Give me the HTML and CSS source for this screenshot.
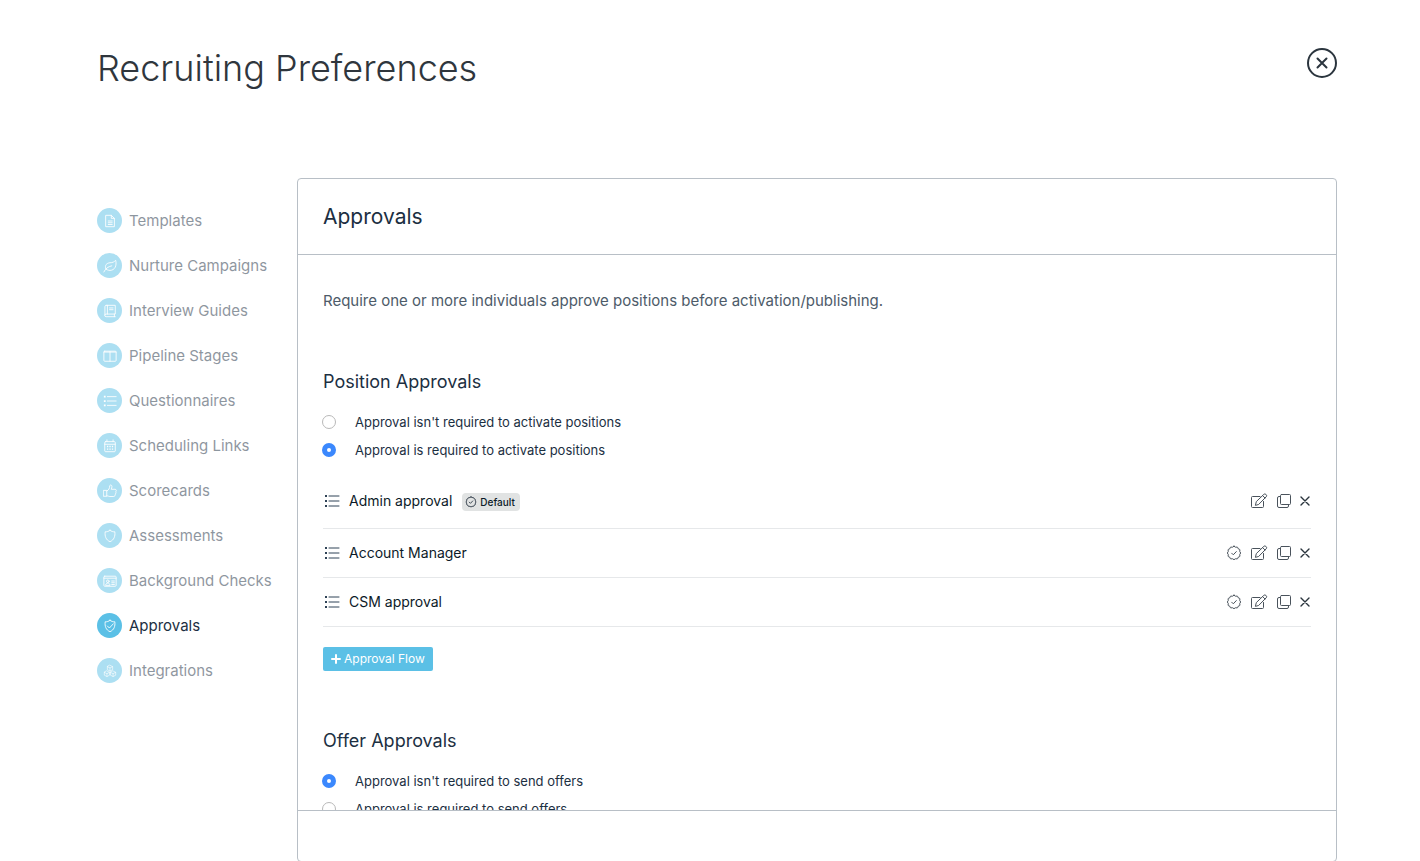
FILE: index.html
```html
<!DOCTYPE html>
<html lang="en">
<head>
<meta charset="UTF-8">
<meta name="viewport" content="width=device-width, initial-scale=1.0">
<title>Recruiting Preferences</title>
<link rel="stylesheet" href="styles.css">
</head>
<body>
<!-- Shared icons -->
<svg class="sprite" aria-hidden="true">
    <symbol id="i-list" viewBox="0 0 16 16">
        <path d="M5 3h10M5 8h10M5 13h10"/>
        <path class="dot" d="M1 2h2v2h-2zM1 7h2v2h-2zM1 12h2v2h-2z"/>
    </symbol>
    <symbol id="i-seal" viewBox="0 0 16 16">
        <path d="M8 1.300Q9.300 2.800 11.100 2.100Q11.900 2.100 12.200 3.800Q13.900 4.100 13.900 4.900Q13.200 6.700 14.700 8Q13.200 9.300 13.900 11.100Q13.900 11.900 12.200 12.200Q11.900 13.900 11.100 13.900Q9.300 13.200 8 14.700Q6.700 13.200 4.900 13.900Q4.100 13.900 3.800 12.200Q2.100 11.900 2.100 11.100Q2.800 9.300 1.300 8Q2.800 6.700 2.100 4.900Q2.100 4.100 3.800 3.800Q4.100 2.100 4.900 2.100Q6.700 2.800 8 1.300z"/>
        <path d="M5.700 8.200l1.600 1.600 3-3.200"/>
    </symbol>
    <symbol id="i-edit" viewBox="0 0 18 16">
        <path d="M10 3.500H2.500a1 1 0 0 0-1 1v9a1 1 0 0 0 1 1h10a1 1 0 0 0 1-1V8.500"/>
        <path d="M5.500 12l.8-3.400 7.500-7.200a1.500 1.500 0 0 1 2.100 0l.3.300a1.500 1.500 0 0 1 0 2.100L8.900 11.200zM12.600 2.600l2.400 2.400"/>
    </symbol>
    <symbol id="i-copy" viewBox="0 0 16 16">
        <rect x="4.500" y="1.500" width="10" height="10" rx="1"/>
        <path d="M4.500 3.500H3A1.500 1.500 0 0 0 1.500 5v8A1.500 1.500 0 0 0 3 14.500h8a1.500 1.500 0 0 0 1.500-1.500v-1.500"/>
    </symbol>
    <symbol id="i-x" viewBox="0 0 10 10">
        <path d="M1 1l8 8M9 1L1 9"/>
    </symbol>
</svg>

<div class="page">
    <header class="page-header">
        <h1>Recruiting Preferences</h1>
        <button type="button" class="btn-close" aria-label="Close">
            <svg viewBox="0 0 30 30"><circle cx="15" cy="15" r="14"/><path d="M10.500 10.500l9 9M19.500 10.500l-9 9"/></svg>
        </button>
    </header>

    <div class="columns">
        <nav class="side-nav">
            <a href="#">
                <span class="nav-icon"><svg viewBox="0 0 16 16"><path d="M3.500 1.500h6l3.500 3.500v9.500H3.500zM9.500 1.500V5H13M6 8h4.500M6 10h4.500M6 12h4.500"/></svg></span>
                Templates
            </a>
            <a href="#">
                <span class="nav-icon"><svg viewBox="0 0 16 16"><path d="M1 14.800c2-4 4.500-6 9-7M3.500 11.500C1.200 7 4.500 4.500 8 4.300c3 0 4.700-1 6.500-2.800 1.500 6-1 11.500-6.500 11.500-2 0-3.500-.6-4.500-1.500z"/></svg></span>
                Nurture Campaigns
            </a>
            <a href="#">
                <span class="nav-icon"><svg viewBox="0 0 16 16"><path d="M3.500 1.500H14v10H3.500A1.300 1.300 0 0 0 3.500 14.500H14M2.200 12.700V3A1.500 1.500 0 0 1 3.500 1.500M5 1.500v10M7.500 4.500h4M7.500 6.500h4M13 11.500v3"/></svg></span>
                Interview Guides
            </a>
            <a href="#">
                <span class="nav-icon"><svg viewBox="0 0 16 16"><rect x="1" y="2.500" width="14" height="11.500" rx="1"/><path d="M8 3v11M1 3.500h14"/></svg></span>
                Pipeline Stages
            </a>
            <a href="#">
                <span class="nav-icon"><svg><use href="#i-list"/></svg></span>
                Questionnaires
            </a>
            <a href="#">
                <span class="nav-icon"><svg viewBox="0 0 16 16"><rect x="2" y="3" width="12" height="11.500" rx="1"/><path d="M2 6h12M4.500 1v2M11.500 1v2"/><path class="dot" d="M4.500 7.800h1.500v1.500H4.500zM7.300 7.800h1.500v1.500H7.300zM10.100 7.800h1.500v1.500h-1.500zM4.500 10.800h1.500v1.500H4.500zM7.300 10.800h1.500v1.500H7.300zM10.100 10.800h1.500v1.500h-1.500z"/></svg></span>
                Scheduling Links
            </a>
            <a href="#">
                <span class="nav-icon"><svg viewBox="0 0 16 16"><path d="M.8 7.300h3.500V14H.8zM4.300 8C7 7 7.500 4.500 7.700 2.200c.1-1.500 2.500-1.500 2.500.8 0 1.200-.5 2.200-.8 3h4.300c1.800 0 1.800 2 .9 2.300.7.700.5 1.800-.3 2.100.4.800.1 1.600-.6 1.900.2 1-.4 2-1.400 2H8c-1.500 0-2-.8-3.700-.8"/></svg></span>
                Scorecards
            </a>
            <a href="#">
                <span class="nav-icon"><svg viewBox="0 0 16 16"><path d="M8 1.500c1.600 1.300 3.400 1.800 5.500 1.700.6 5-.8 9.300-5.500 11.300-4.700-2-6.100-6.300-5.500-11.300 2.100.1 3.900-.4 5.500-1.700z"/></svg></span>
                Assessments
            </a>
            <a href="#">
                <span class="nav-icon"><svg viewBox="0 0 16 16"><rect x="1" y="2.500" width="14" height="11.500" rx="1"/><path d="M1 4.800h14M10 8h3M10 10h3M10 12h3M3 12.500c.2-3 4.800-3 5 0z"/><circle cx="5.500" cy="8.300" r="1.500"/></svg></span>
                Background Checks
            </a>
            <a href="#" class="active" aria-current="page">
                <span class="nav-icon"><svg viewBox="0 0 16 16"><path d="M8 1.500c1.600 1.300 3.400 1.800 5.500 1.700.6 5-.8 9.300-5.500 11.300-4.700-2-6.100-6.300-5.500-11.300 2.100.1 3.900-.4 5.500-1.700zM5 8l2.300 2.300 4.500-4.800"/></svg></span>
                Approvals
            </a>
            <a href="#">
                <span class="nav-icon"><svg class="fine" viewBox="0 0 16 16"><path d="M8 1.500l3 1.500v3.500L8 8 5 6.500V3zM5 3l3 1.500L11 3M8 4.500V8M4.500 8l3 1.500v3.300l-3 1.500-3-1.500V9.500zM1.500 9.500l3 1.500 3-1.500M4.500 11v3.300M11.500 8l3 1.500v3.300l-3 1.500-3-1.500V9.500zM8.500 9.500l3 1.500 3-1.500M11.500 11v3.300"/></svg></span>
                Integrations
            </a>
        </nav>

        <main class="card">
            <div class="card-header">
                <h2>Approvals</h2>
            </div>
            <div class="card-body">
                <p class="intro">Require one or more individuals approve positions before activation/publishing.</p>

                <section>
                    <h3>Position Approvals</h3>
                    <label class="radio-row"><input type="radio" name="position"> Approval isn't required to activate positions</label>
                    <label class="radio-row"><input type="radio" name="position" checked> Approval is required to activate positions</label>

                    <ul class="flows">
                        <li class="flow flow-default">
                            <svg class="flow-icon"><use href="#i-list"/></svg>
                            <span class="flow-name">Admin approval</span>
                            <span class="badge"><svg><use href="#i-seal"/></svg>Default</span>
                            <div class="actions">
                                <button type="button" aria-label="Edit"><svg class="edit"><use href="#i-edit"/></svg></button>
                                <button type="button" aria-label="Duplicate"><svg><use href="#i-copy"/></svg></button>
                                <button type="button" aria-label="Delete"><svg class="x"><use href="#i-x"/></svg></button>
                            </div>
                        </li>
                        <li class="flow">
                            <svg class="flow-icon"><use href="#i-list"/></svg>
                            <span class="flow-name">Account Manager</span>
                            <div class="actions">
                                <button type="button" aria-label="Make default"><svg><use href="#i-seal"/></svg></button>
                                <button type="button" aria-label="Edit"><svg class="edit"><use href="#i-edit"/></svg></button>
                                <button type="button" aria-label="Duplicate"><svg><use href="#i-copy"/></svg></button>
                                <button type="button" aria-label="Delete"><svg class="x"><use href="#i-x"/></svg></button>
                            </div>
                        </li>
                        <li class="flow">
                            <svg class="flow-icon"><use href="#i-list"/></svg>
                            <span class="flow-name">CSM approval</span>
                            <div class="actions">
                                <button type="button" aria-label="Make default"><svg><use href="#i-seal"/></svg></button>
                                <button type="button" aria-label="Edit"><svg class="edit"><use href="#i-edit"/></svg></button>
                                <button type="button" aria-label="Duplicate"><svg><use href="#i-copy"/></svg></button>
                                <button type="button" aria-label="Delete"><svg class="x"><use href="#i-x"/></svg></button>
                            </div>
                        </li>
                    </ul>
                    <button type="button" class="btn-add"><svg viewBox="0 0 10 10"><path d="M5 1v8M1 5h8"/></svg>Approval Flow</button>
                </section>

                <section>
                    <h3>Offer Approvals</h3>
                    <label class="radio-row"><input type="radio" name="offer" checked> Approval isn't required to send offers</label>
                    <label class="radio-row"><input type="radio" name="offer"> Approval is required to send offers</label>
                </section>
            </div>
            <div class="card-footer"></div>
        </main>
    </div>
</div>
</body>
</html>
```

FILE: styles.css
```css
* {
    box-sizing: border-box;
}
body {
    margin: 0;
    font-family: Inter, "Liberation Sans", sans-serif;
    color: #1c2f42;
    background: #fff;
}
h1, h2, h3, p, ul {
    margin: 0;
    padding: 0;
}
button {
    font-family: inherit;
    color: inherit;
    border: 0;
    background: none;
    padding: 0;
    cursor: pointer;
}
svg {
    display: block;
    width: 16px;
    height: 16px;
    fill: none;
    stroke: currentColor;
    stroke-width: 1;
    stroke-linecap: round;
    stroke-linejoin: round;
}
.dot {
    fill: currentColor;
    stroke: none;
}
.sprite {
    display: none;
}

.page {
    display: flex;
    flex-direction: column;
    height: 100vh;
    padding: 44px 83px 0 97px;
    overflow: hidden;
}
.page-header {
    display: flex;
    justify-content: space-between;
    align-items: flex-start;
    margin-bottom: 86px;
}
h1 {
    font-size: 36px;
    line-height: 48px;
    font-weight: 300;
    color: #2f363d;
}
.btn-close {
    margin-top: 4px;
}
.btn-close svg {
    width: 30px;
    height: 30px;
    stroke: #2b353e;
    stroke-width: 2;
}
.columns {
    display: flex;
    flex: 1;
    min-height: 0;
}

/* Side navigation */
.side-nav {
    display: flex;
    flex-direction: column;
    flex: 0 0 200px;
    gap: 20px;
    padding-top: 30px;
}
.side-nav a {
    display: flex;
    align-items: center;
    gap: 7px;
    font-size: 15px;
    line-height: 25px;
    white-space: nowrap;
    color: #1c2f42;
    text-decoration: none;
    opacity: .5;
}
.side-nav a.active {
    opacity: 1;
}
.nav-icon {
    display: flex;
    align-items: center;
    justify-content: center;
    width: 25px;
    height: 25px;
    border-radius: 50%;
    background: #5bc0e6;
    color: #fff;
}
.nav-icon svg {
    width: 14px;
    height: 14px;
}
.nav-icon .fine {
    stroke-width: .7;
}

/* Card */
.card {
    display: flex;
    flex-direction: column;
    flex: 1;
    min-width: 0;
    margin-bottom: -1px;
    border: 1px solid #b8bfc6;
    border-radius: 4px;
}
.card-header {
    padding: 25px;
    border-bottom: 1px solid #b8bfc6;
}
h2 {
    font-size: 21px;
    line-height: 25px;
    font-weight: 400;
}
.card-body {
    flex: 1;
    min-height: 0;
    padding: 34px 25px;
    overflow-y: auto;
    scrollbar-width: none;
}
.card-footer {
    flex: 0 0 51px;
    border-top: 1px solid #b8bfc6;
}
.intro {
    font-size: 15px;
    line-height: 23px;
    color: #4d5b69;
}
section {
    margin-top: 57px;
}
h3 {
    margin-bottom: 13px;
    font-size: 18px;
    line-height: 26px;
    font-weight: 400;
}
.radio-row {
    display: flex;
    align-items: center;
    gap: 19px;
    font-size: 13px;
    line-height: 28px;
}
.radio-row input {
    appearance: none;
    width: 14px;
    height: 14px;
    margin: 0 0 0 -1px;
    border: 1px solid #b9b9b9;
    border-radius: 50%;
    background: #fff;
}
.radio-row input:checked {
    border: 5px solid #3b88fd;
}

/* Approval flows */
.flows {
    margin: 13px 0 20px;
    list-style: none;
}
.flow {
    display: flex;
    align-items: center;
    padding: 12px 0;
    border-bottom: 1px solid #e6e8ea;
    font-size: 14px;
    line-height: 24px;
    color: #0c1a28;
}
.flow-default {
    padding-bottom: 15px;
}
.flow-icon {
    margin: 0 9px 0 1px;
    color: #2f4356;
}
.badge {
    display: flex;
    align-items: center;
    gap: 3px;
    margin: 2px 0 0 10px;
    padding: 0 5px 0 3px;
    border-radius: 4px;
    background: #e1e3e3;
    font-size: 10px;
    line-height: 18px;
    font-weight: 500;
}
.badge svg {
    width: 12px;
    height: 12px;
}
.actions {
    display: flex;
    align-items: center;
    gap: 8px;
    margin-left: auto;
    color: #4a535c;
}
.actions .edit {
    width: 18px;
}
.actions .x {
    width: 10px;
    height: 10px;
    margin-right: 1px;
    color: #2b353e;
    stroke-width: 1.4;
}
.btn-add {
    display: flex;
    align-items: center;
    gap: 3px;
    padding: 0 8px;
    border-radius: 2px;
    background: #5bc0e6;
    color: #fff;
    font-size: 12px;
    line-height: 24px;
}
.btn-add svg {
    width: 10px;
    height: 10px;
    stroke-width: 2;
}
```
